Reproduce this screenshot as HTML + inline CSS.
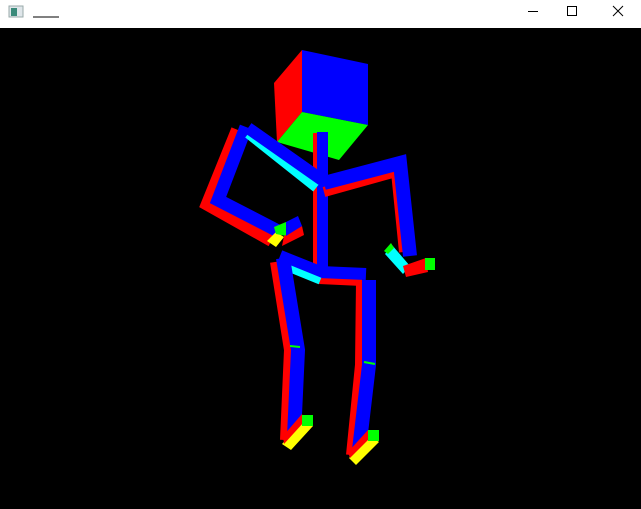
<!DOCTYPE html>
<html><head><style>
body{margin:0;width:641px;height:509px;overflow:hidden;background:#000;font-family:"Liberation Sans",sans-serif}
.tb{position:absolute;left:0;top:0;width:641px;height:28px;background:#fff}
.cv{position:absolute;left:0;top:28px}
</style></head><body>
<div class="tb">
<svg width="641" height="28" style="position:absolute;left:0;top:0">
<rect x="9" y="6" width="14" height="11" fill="#dfe6ea" stroke="#9aa" stroke-width="1"/>
<rect x="11" y="8" width="6" height="8" fill="#3a8a7a"/>
<line x1="33" y1="17" x2="59" y2="17" stroke="#000" stroke-width="1"/>
<line x1="528" y1="11.5" x2="538" y2="11.5" stroke="#000"/>
<rect x="567.5" y="6.5" width="9" height="9" fill="none" stroke="#000"/>
<path d="M613 6L623 16M623 6L613 16" stroke="#000"/>
</svg></div>
<svg class="cv" width="641" height="481" viewBox="0 28 641 481">
<rect x="0" y="28" width="641" height="481" fill="#000"/>
<!-- head -->
<polygon points="274,83 302,50 302,112 277,142" fill="#f00"/>
<polygon points="302,50 368,64 368,125 302,112" fill="#00f"/>
<polygon points="302,112 368,125 339,160 277,142" fill="#0f0"/>
<!-- spine -->
<rect x="313" y="133" width="8" height="140" fill="#f00"/>
<rect x="317" y="132" width="11" height="142" fill="#00f"/>
<!-- left arm -->
<polyline points="238,130 208,204 272,240" fill="none" stroke="#f00" stroke-width="14" stroke-linejoin="miter"/>
<polyline points="246,127 218,200 280,232" fill="none" stroke="#00f" stroke-width="13" stroke-linejoin="miter"/>
<line x1="248" y1="134" x2="316" y2="188" stroke="#0ff" stroke-width="9"/>
<line x1="248" y1="128" x2="322" y2="180" stroke="#00f" stroke-width="12"/>
<polygon points="267,241 276,232 284,237 276,247" fill="#ff0"/>
<polygon points="274,227 286,222 286,236 276,234" fill="#0f0"/>
<polygon points="284,236 302,226 304,235 282,246" fill="#f00"/>
<polygon points="286,222 298,216 302,226 286,236" fill="#00f"/>
<!-- right arm -->
<polyline points="324,192 396,172 404,252" fill="none" stroke="#f00" stroke-width="10"/>
<polyline points="324,183 400,163 410,256" fill="none" stroke="#00f" stroke-width="14"/>
<polygon points="385,254 392,245 410,266 403,274" fill="#0ff"/>
<polygon points="384,251 391,243 394,248 388,254" fill="#0f0"/>
<polygon points="403,266 426,258 428,272 406,277" fill="#f00"/>
<rect x="425" y="258" width="10" height="12" fill="#0f0"/>
<!-- hips -->
<polyline points="280,262 320,279 362,281" fill="none" stroke="#f00" stroke-width="10"/>
<polyline points="280,256 320,272 366,274" fill="none" stroke="#00f" stroke-width="12"/>
<line x1="288" y1="268" x2="320" y2="281" stroke="#0ff" stroke-width="7"/>
<!-- left leg -->
<polyline points="275,262 289,350 285,440" fill="none" stroke="#f00" stroke-width="10"/>
<polyline points="283,258 298,350 294,436" fill="none" stroke="#00f" stroke-width="14"/>
<line x1="290" y1="346" x2="300" y2="347" stroke="#0f0" stroke-width="2"/>
<polygon points="282,444 304,420 313,426 291,450" fill="#ff0"/>
<polygon points="283,436 302,414 304,422 284,444" fill="#f00"/>
<rect x="302" y="415" width="11" height="11" fill="#0f0"/>
<!-- right leg -->
<polyline points="361,282 360,365 351,455" fill="none" stroke="#f00" stroke-width="10"/>
<polyline points="369,280 369,365 359,450" fill="none" stroke="#00f" stroke-width="14"/>
<line x1="364" y1="362" x2="375" y2="364" stroke="#0f0" stroke-width="2"/>
<polygon points="349,458 371,436 379,442 356,465" fill="#ff0"/>
<polygon points="348,452 368,430 370,438 350,458" fill="#f00"/>
<rect x="368" y="430" width="11" height="11" fill="#0f0"/>
</svg>
</body></html>
